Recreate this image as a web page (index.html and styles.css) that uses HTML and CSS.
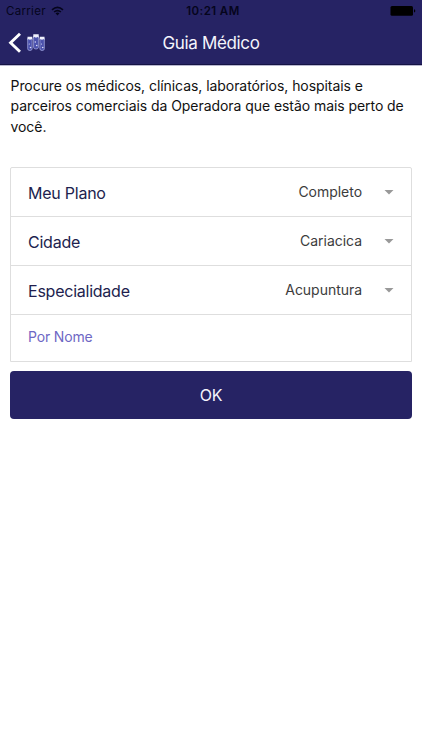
FILE: index.html
```html
<!DOCTYPE html>
<html lang="pt-BR">
<head>
<meta charset="utf-8">
<title>Guia Médico</title>
<link rel="stylesheet" href="styles.css">
</head>
<body>
<header class="header">
  <div class="status">
    <div class="carrier"><span>Carrier</span>
      <svg class="wifi" viewBox="0 0 13 10"><path d="M1 3.8Q6.500-.9 12 3.800M3.100 6Q6.500 3.100 9.900 6" fill="none" stroke="#05051c" stroke-width="1.600"/><path d="M4.500 7.300Q6.500 5.700 8.500 7.300L6.500 9.500z" fill="#05051c"/></svg>
    </div>
    <div class="time">10:21 AM</div>
    <svg class="battery" viewBox="0 0 26 10"><rect x=".5" width="22.500" height="9.700" rx="1.500"/><path d="M24 3.300q1.300.2 1.300 1.600T24 6.500z"/></svg>
  </div>
  <div class="nav">
    <div class="back">
      <svg class="chevron" viewBox="0 0 14 22"><path d="M12 1.800L2.600 10.800L12 19.800" fill="none" stroke="#fff" stroke-width="2.900"/></svg>
      <svg class="logo" viewBox="0 0 18 18">
        <g fill="#4a50ac" stroke="#9da2dc" stroke-width=".8">
          <path d="M.7 4.500h4.400v10.300q0 1.700-2.200 1.700T.7 14.800z"/>
          <path d="M12.900 4.500h4.400v10.300q0 1.700-2.200 1.700t-2.200-1.700z"/>
          <path d="M6.600 2h4.800v11.200q0 1.800-2.400 1.800t-2.400-1.800z"/>
        </g>
        <path d="M.5 2.800h4.800v3L4 5l-1 1.300L2 5l-1.500.8zM12.700 2.800h4.800v3L16 5l-1 1.300L14 5l-1.300.8zM6.300.3h5.400v3.400l-1.700-.9-1 1.500-1-1.500-1.700.9z" fill="#f0f1fc"/>
        <g fill="#dcdff8"><circle cx="2.300" cy="10" r=".6"/><circle cx="3.500" cy="13.500" r=".8"/><circle cx="8.300" cy="8" r=".7"/><circle cx="9.700" cy="11.500" r=".8"/><circle cx="14.500" cy="10" r=".6"/><circle cx="15.700" cy="13.500" r=".8"/></g>
      </svg>
    </div>
    <h1 class="title">Guia Médico</h1>
  </div>
</header>
<main class="content">
  <p class="intro">Procure os médicos, clínicas, laboratórios, hospitais e<br>parceiros comerciais da Operadora que estão mais perto de<br>você.</p>
  <div class="form">
    <div class="row"><span class="label">Meu Plano</span><span class="value">Completo</span><i class="arrow"></i></div>
    <div class="row"><span class="label">Cidade</span><span class="value">Cariacica</span><i class="arrow"></i></div>
    <div class="row"><span class="label">Especialidade</span><span class="value">Acupuntura</span><i class="arrow"></i></div>
    <div class="name">Por Nome</div>
  </div>
  <div class="button">OK</div>
</main>
</body>
</html>
```
FILE: styles.css
```css
* { box-sizing: border-box; }
body { margin: 0; background: #fff; color: #111; font-family: Inter, "Liberation Sans", sans-serif; }
.header { height: 65px; background: #262364; border-bottom: 1px solid #151344; box-shadow: 0 1px 0 #b9b8d0; }
.status { display: grid; grid-template-columns: 1fr auto 1fr; align-items: center; height: 22px; padding: 0 6px; color: #05051c; font-size: 11.5px; }
.carrier { display: flex; align-items: center; gap: 5px; letter-spacing: .3px; }
.wifi { width: 13px; height: 10px; }
.time { font-weight: 600; font-size: 11.5px; letter-spacing: .42px; padding-left: 4px; }
.battery { width: 26px; height: 10px; justify-self: end; fill: #000; }
.nav { display: grid; grid-template-columns: 1fr auto 1fr; align-items: center; height: 42px; padding: 0 8px; }
.back { display: flex; align-items: center; gap: 5px; }
.chevron { width: 14px; height: 22px; }
.logo { width: 18px; height: 18px; }
.title { margin: 0; color: #f5f5fc; font-size: 17px; font-weight: 400; line-height: 22px; letter-spacing: -.35px; }
.content { padding: 11px 10px 0; }
.intro { margin: 0; height: 91px; padding-left: .5px; font-size: 14px; line-height: 20.4px; letter-spacing: -.06px; white-space: nowrap; }
.form { border: 1px solid #dedede; border-radius: 2px 2px 0 0; }
.row { display: flex; align-items: center; height: 49px; padding: 0 17px; border-bottom: 1px solid #dedede; }
.label { flex: 1; padding-top: 1px; color: #211e4e; font-size: 16px; letter-spacing: -.24px; }
.value { padding-bottom: 2px; color: #3c3c3c; font-size: 14px; letter-spacing: -.03px; }
.arrow { width: 10px; height: 5px; margin-left: 22px; background: #999; clip-path: polygon(0 0, 100% 0, 50% 100%); }
.name { height: 46px; padding-left: 17px; color: #6e67c4; font-size: 14px; line-height: 44px; letter-spacing: -.15px; }
.button { height: 48px; margin-top: 9px; border-radius: 4px; background: #262364; color: #f5f5fc; text-align: center; font-size: 16px; line-height: 49px; letter-spacing: -.3px; }
```
